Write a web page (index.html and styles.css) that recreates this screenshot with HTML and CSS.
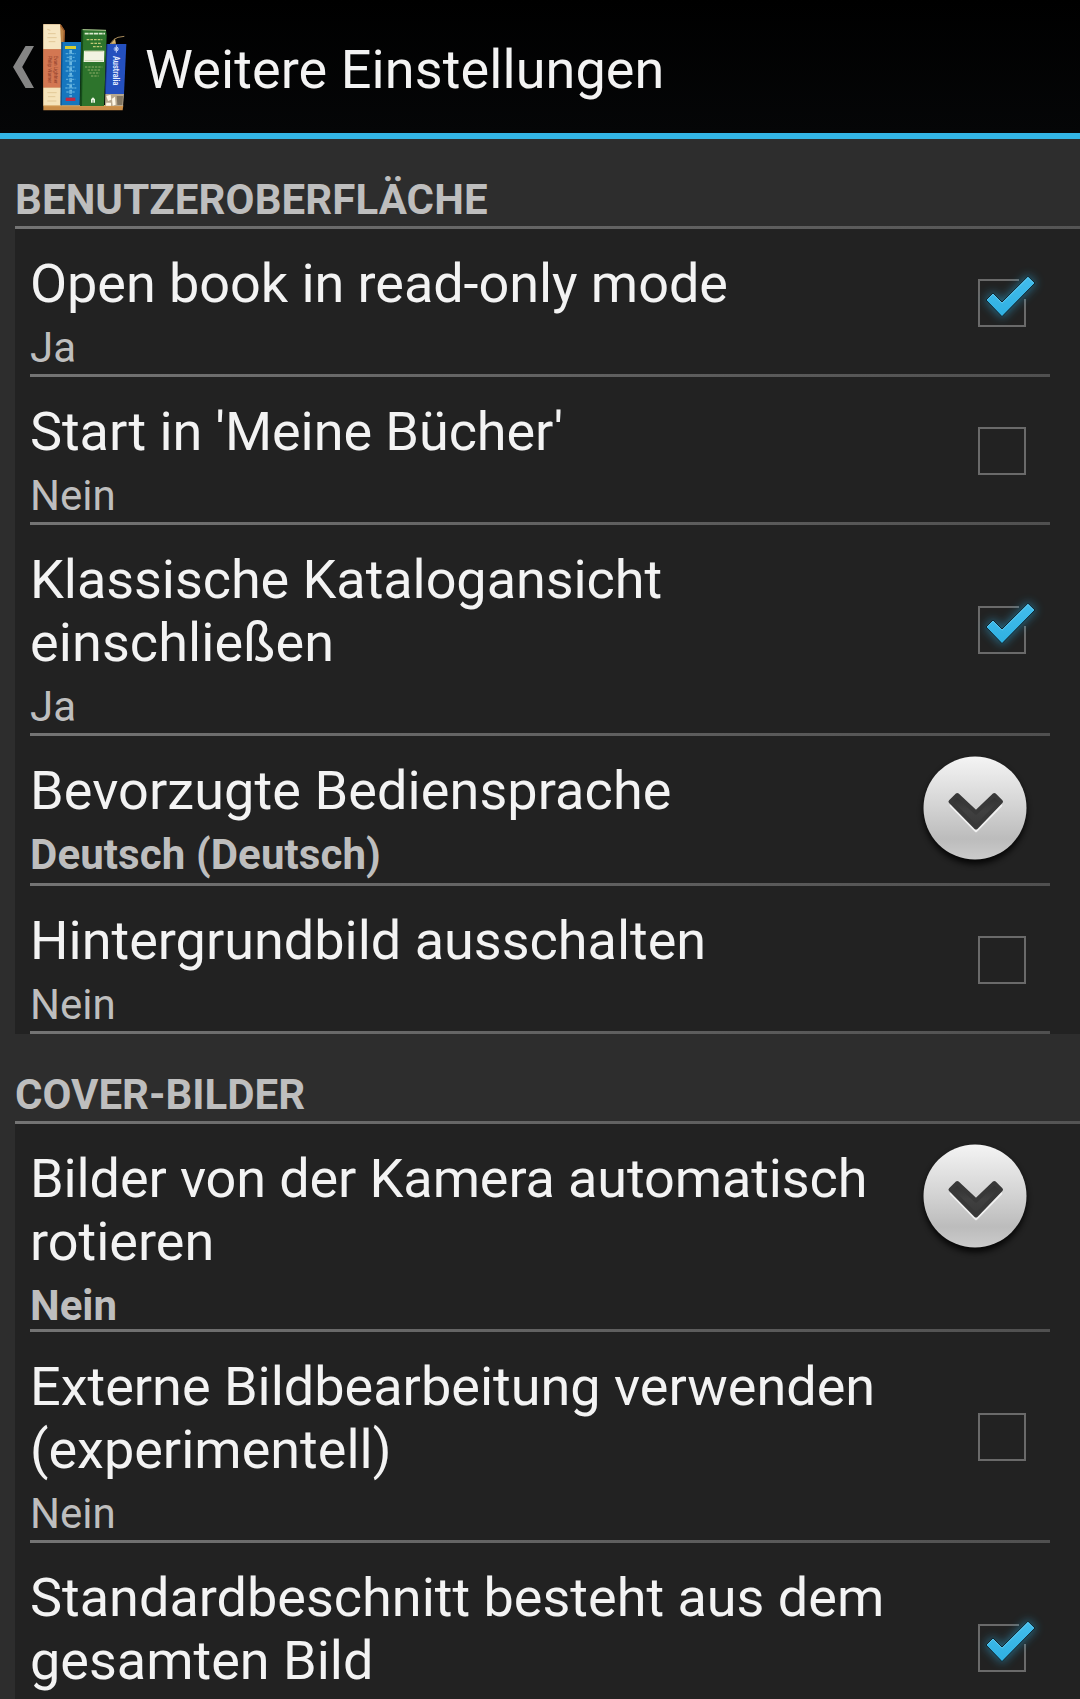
FILE: index.html
```html
<!DOCTYPE html>
<html lang="de">
<head>
<meta charset="utf-8">
<title>Weitere Einstellungen</title>
<link rel="stylesheet" href="styles.css">
</head>
<body>
<svg class="defs" width="0" height="0" aria-hidden="true">
  <defs>
    <linearGradient id="tick-fill" x1="0" y1="0" x2="0" y2="1"><stop offset="0" stop-color="#43bdec"/><stop offset="1" stop-color="#2fb0e2"/></linearGradient>
    <filter id="glow" x="-60%" y="-60%" width="220%" height="220%"><feGaussianBlur stdDeviation="5"/></filter>
    <linearGradient id="disc-fill" x1="0" y1="0" x2="0" y2="1"><stop offset="0" stop-color="#f4f4f4"/><stop offset=".5" stop-color="#d2d2d2"/><stop offset=".8" stop-color="#bcbcbc"/><stop offset="1" stop-color="#cbcbcb"/></linearGradient>
    <linearGradient id="chevron-fill" x1="0" y1="0" x2="0" y2="1"><stop offset="0" stop-color="#303030"/><stop offset=".5" stop-color="#404040"/><stop offset="1" stop-color="#383838"/></linearGradient>
    <filter id="soft" x="-20%" y="-20%" width="140%" height="140%"><feGaussianBlur stdDeviation="3.2"/></filter>
    <symbol id="box-off" viewBox="0 0 96 96"><rect x="25" y="25" width="46" height="46" fill="none" stroke="#6a6a6a" stroke-width="2"/></symbol>
    <symbol id="box-on" viewBox="0 0 96 96">
      <path d="M65 25H25V71H71V44" fill="none" stroke="#6a6a6a" stroke-width="2"/>
      <path d="M32.3 45 39 38.3 48 47.3 74 21.7 80.7 28 48 61.3Z" fill="#2aa4d4" stroke="#2aa4d4" stroke-width="3" opacity=".55" filter="url(#glow)"/>
      <path d="M32 45 39 38 48 47 74 21.2 81 28 48 61.6Z" fill="url(#tick-fill)" stroke="#10252e" stroke-width="1"/>
      <path d="M33.4 44.8 39 39.2 48 48.2 74 22.6 79.2 27.8" fill="none" stroke="#7bd3f4" stroke-width="1" opacity=".6"/>
    </symbol>
    <symbol id="more" viewBox="0 0 120 124">
      <ellipse cx="60" cy="64" rx="51.5" ry="52" fill="#000" opacity=".85" filter="url(#soft)"/>
      <circle cx="60" cy="60" r="51.5" fill="url(#disc-fill)"/>
      <path d="M36 57.5 61 83 86 57.5" fill="none" stroke="#f0f0f0" stroke-width="2.5" stroke-linecap="round" stroke-linejoin="round"/>
      <path d="M35.5 53.7 42.3 47 61 64.5 79.3 47 86 53.7 61 79.5Z" fill="url(#chevron-fill)" stroke="#383838" stroke-width="4" stroke-linejoin="round"/>
    </symbol>
  </defs>
</svg>

<header class="bar">
  <svg class="back" viewBox="0 0 21 42"><path d="M0 21 12.5 0H21L9.2 21 21 42H12.5Z" fill="#858585"/></svg>
  <svg class="books" viewBox="120 60 270 282">
    <path d="M130 316 370 316 368 331H130Z" fill="#c98d48"/><path d="M130 317H369" stroke="#e8b66e" stroke-width="3"/>
    <path d="M130 72 182 73 194 92 185 316H130Z" fill="#bd8446"/>
    <path d="M130 73H180L184 148H130Z" fill="#f6e6c2"/>
    <path d="M130 148H184L183 263H130Z" fill="#d37752"/>
    <path d="M130 263H183V316H130Z" fill="#f5e3ba"/>
    <path d="M182 76 193 93 185 263" stroke="#9a5a2c" stroke-width="4" fill="none"/>
    <path d="M142 88 151 91M144 101H167M142 113H170M146 125H166M142 278H170M144 290H166M142 303H169" stroke="#e2c998" stroke-width="3"/>
    <text class="tiny" transform="translate(162 167) rotate(90)">Evan Lightner</text>
    <text class="tiny" transform="translate(144 167) rotate(90)">Philip Warner</text>
    <path d="M186 126H243L239 316H183Z" fill="#1676be"/>
    <path d="M183 316 186 126" stroke="#0d4f88" stroke-width="4"/>
    <path d="M195 138H228V147H195Z" fill="#d8cf32"/><path d="M197 293H226V303H197Z" fill="#c02a45"/>
    <path d="M212 150V290" stroke="#6bb8e2" stroke-width="8" stroke-dasharray="12 5"/>
    <path d="M197 161H227M200 172H224M196 183H228M200 201H224M197 213H227M204 228H220M198 238H226M200 253H224M196 264H229M199 276H225" stroke="#55a8d8" stroke-width="4" stroke-dasharray="7 2"/>
    <path d="M247 88 318 90 320 106 312 318H243Z" fill="#2d742c"/>
    <path d="M247 88 243 318" stroke="#164d1b" stroke-width="6"/><path d="M248 89 318 91" stroke="#b7c898" stroke-width="3"/>
    <path d="M254 101H315" stroke="#dce8cd" stroke-width="5" stroke-dasharray="12 2"/>
    <path d="M260 119H307M272 130H305M279 140H306" stroke="#c2c775" stroke-width="4" stroke-dasharray="8 3"/>
    <path d="M252 152H313L312 186H251Z" fill="#f2f3e2"/><path d="M254 154H310M254 182H309" stroke="#cad4ae" stroke-width="3"/>
    <path d="M255 201H307M263 210H302M268 219H299M273 228H296" stroke="#91ae69" stroke-width="3" stroke-dasharray="7 3"/>
    <path d="M273 308V298L279 292 285 298V308H280V300H278V308Z" fill="#edf4e4"/>
    <path d="M330 132 342 118 354 112 373 109" fill="none" stroke="#a88b5b" stroke-width="3"/><path d="M332 132 345 116 348 131Z" fill="#d8b46e"/>
    <path d="M321 132H379L372 282H316Z" fill="#2450be"/><path d="M321 132 316 282" stroke="#173580" stroke-width="3"/>
    <path d="M341 147H357M349 136V158M344 141 354 153M354 141 344 153" stroke="#cbd9fb" stroke-width="3"/>
    <text class="spine" transform="translate(338 168) rotate(90)" textLength="88" lengthAdjust="spacingAndGlyphs">Australia</text>
    <path d="M316 282H372L369 318H315Z" fill="#b8a88e"/><path d="M319 288 332 284 334 299 324 303ZM336 296 345 290 347 314 338 317ZM319 308H333V317H318Z" fill="#fff8e6"/><path d="M350 288H369L367 315H352Z" fill="#817562"/>
  </svg>
  <h1 class="heading">Weitere Einstellungen</h1>
</header>

<main class="settings">
  <section class="group">
    <h2 class="group-title airy">BENUTZEROBERFLÄCHE</h2>
    <div class="row"><div class="copy"><div class="title snug">Open book in read-only mode</div><div class="value">Ja</div></div><svg class="check"><use href="#box-on"/></svg></div>
    <div class="row"><div class="copy"><div class="title snug">Start in 'Meine Bücher'</div><div class="value">Nein</div></div><svg class="check"><use href="#box-off"/></svg></div>
    <div class="row row-tall"><div class="copy"><div class="title"><span class="snug">Klassische Katalogansicht</span><br><span class="airy">einschließen</span></div><div class="value">Ja</div></div><svg class="check"><use href="#box-on"/></svg></div>
    <div class="row row-menu"><div class="copy"><div class="title airy">Bevorzugte Bediensprache</div><div class="value airy">Deutsch (Deutsch)</div></div><svg class="more"><use href="#more"/></svg></div>
    <div class="row"><div class="copy"><div class="title">Hintergrundbild ausschalten</div><div class="value">Nein</div></div><svg class="check"><use href="#box-off"/></svg></div>
  </section>
  <section class="group">
    <h2 class="group-title">COVER-BILDER</h2>
    <div class="row row-menu"><div class="copy"><div class="title"><span class="tight">Bilder von der Kamera automatisch</span><br>rotieren</div><div class="value">Nein</div></div><svg class="more"><use href="#more"/></svg></div>
    <div class="row row-tall"><div class="copy"><div class="title">Externe Bildbearbeitung verwenden<br>(experimentell)</div><div class="value">Nein</div></div><svg class="check"><use href="#box-off"/></svg></div>
    <div class="row row-tall"><div class="copy"><div class="title">Standardbeschnitt besteht aus dem<br>gesamten Bild</div></div><svg class="check"><use href="#box-on"/></svg></div>
  </section>
</main>
</body>
</html>
```

FILE: styles.css
```css
* { box-sizing: border-box; }

html, body {
  margin: 0;
  height: 1699px;
  overflow: hidden;
}

body {
  display: flex;
  flex-direction: column;
  background: #2d2d2d;
  color: #f3f3f3;
  font-family: Roboto, "Liberation Sans", sans-serif;
}

svg { display: block; flex: none; }
.defs { position: absolute; }

.bar {
  flex: none;
  display: flex;
  height: 139px;
  padding-left: 13px;
  background: linear-gradient(#000, #050607);
  border-bottom: 6px solid #33b5e5;
}

.back { width: 21px; height: 42px; margin-top: 46px; }
.books { width: 90px; height: 94px; margin: 20px 0 0 6px; }
.tiny { font-size: 14px; fill: #8a3a28; }
.spine { font-size: 26px; font-weight: 700; fill: #e6edff; }

.heading {
  margin: 38px 0 0 15px;
  font-size: 54px;
  line-height: 63px;
  font-weight: 400;
  letter-spacing: .1px;
  white-space: nowrap;
}

.settings {
  flex: 1;
  min-height: 0;
  overflow: hidden;
  padding-left: 15px;
}

.group { background: #222; }

.group-title {
  height: 90px;
  margin: 0;
  padding-top: 36px;
  background: linear-gradient(90deg, #747474, #545454) bottom / 100% 3px no-repeat #2d2d2d;
  color: #bebebe;
  font-size: 42px;
  line-height: 49px;
  font-weight: 700;
}

.row {
  display: flex;
  align-items: center;
  justify-content: space-between;
  margin: 0 30px 0 15px;
  padding-bottom: 6px;
  background: linear-gradient(90deg, #747474, #505050) bottom / 100% 3px no-repeat;
}

.copy { align-self: flex-start; padding-top: 23px; }

.title {
  font-size: 54px;
  line-height: 63px;
  white-space: nowrap;
}

.value {
  margin-top: 9px;
  color: #bebebe;
  font-size: 42px;
  line-height: 47px;
}

.snug { letter-spacing: -.06px; }
.tight { letter-spacing: -.11px; }
.airy { letter-spacing: .1px; }

.check {
  width: 96px;
  height: 96px;
  margin: 6px 0 0;
}

.row-tall { min-height: 211px; }
.row-tall .check { margin-top: 5px; }

.row-menu { align-items: flex-start; padding-bottom: 3px; }
.row-menu .value { font-weight: 700; }
.row-menu:nth-child(5) { padding-bottom: 8px; }
.more { width: 120px; height: 124px; margin: 12px 15px 0 0; }
```
